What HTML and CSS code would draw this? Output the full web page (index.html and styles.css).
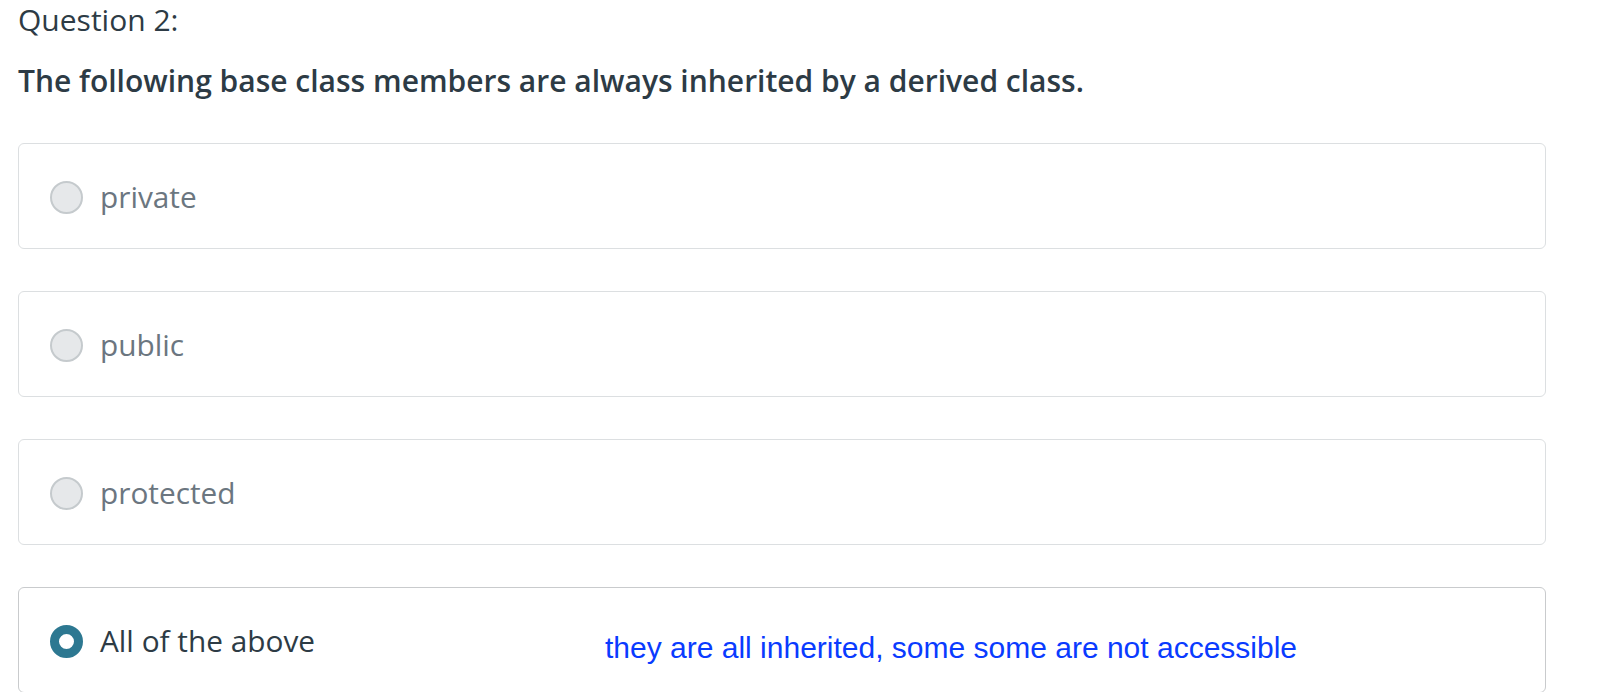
FILE: index.html
```html
<!DOCTYPE html>
<html>
<head>
<meta charset="utf-8">
<link rel="stylesheet" href="styles.css">
</head>
<body>
<div class="page">
  <div class="q-label">Question 2:</div>
  <div class="q-text">The following base class members are always inherited by a derived class.</div>
  <div class="answers">
    <div class="answer">
      <span class="radio"></span>
      <span class="label">private</span>
    </div>
    <div class="answer">
      <span class="radio"></span>
      <span class="label">public</span>
    </div>
    <div class="answer">
      <span class="radio"></span>
      <span class="label">protected</span>
    </div>
    <div class="answer selected">
      <span class="radio"></span>
      <span class="label">All of the above</span>
      <span class="note">they are all inherited, some some are not accessible</span>
    </div>
  </div>
</div>
</body>
</html>
```

FILE: styles.css
```css
html, body {
  margin: 0;
  padding: 0;
  background: #ffffff;
}
body {
  font-family: "Open Sans", "Noto Sans", sans-serif;
  color: #2d3b45;
}
.page {
  padding: 2px 64px 0 18px;
}
.q-label {
  font-size: 30px;
  line-height: 36px;
  font-weight: 400;
  color: #2d3b45;
}
.q-text {
  margin-top: 24px;
  font-size: 30px;
  line-height: 38px;
  font-weight: 600;
  color: #2d3b45;
}
.answers {
  margin-top: 43px;
  display: flex;
  flex-direction: column;
  gap: 42px;
}
.answer {
  box-sizing: border-box;
  height: 106px;
  border: 1px solid #dcdfe1;
  border-radius: 6px;
  display: flex;
  align-items: center;
  padding-left: 31px;
  padding-top: 2px;
}
.answer.selected {
  border-color: #c9cbcd;
}
.radio {
  box-sizing: border-box;
  width: 33px;
  height: 33px;
  border-radius: 50%;
  background: #e6e8ea;
  border: 2px solid #c5cacd;
  flex: none;
}
.selected .radio {
  background: #ffffff;
  border: 9px solid #2d7891;
}
.label {
  margin-left: 17px;
  font-size: 29.8px;
  line-height: 40px;
  color: #6b7680;
}
.selected .label {
  color: #2d3b45;
}
.note {
  margin-left: 290px;
  margin-top: 14px;
  font-family: "Liberation Sans", Arial, sans-serif;
  font-size: 30px;
  line-height: 36px;
  color: #0a3bff;
}
```
